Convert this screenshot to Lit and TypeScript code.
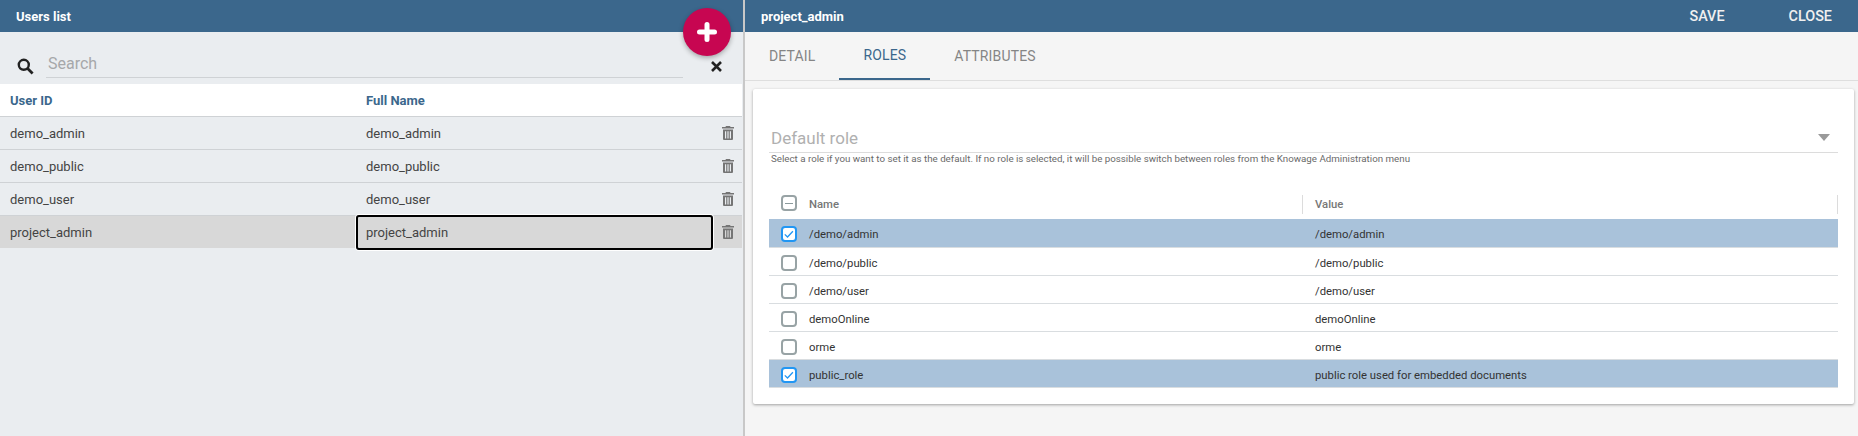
import { LitElement, css, html, svg } from 'lit'
import { customElement } from 'lit/decorators.js'

const users = ['demo_admin', 'demo_public', 'demo_user', 'project_admin']

const roles = [
  { name: '/demo/admin', value: '/demo/admin', checked: true },
  { name: '/demo/public', value: '/demo/public', checked: false },
  { name: '/demo/user', value: '/demo/user', checked: false },
  { name: 'demoOnline', value: 'demoOnline', checked: false },
  { name: 'orme', value: 'orme', checked: false },
  { name: 'public_role', value: 'public role used for embedded documents', checked: true },
]

const trash = svg`<path fill-rule="evenodd" d="M4 0h4l.6 1H12v1.6H0V1h3.4zM1 3.6h10V13a1 1 0 0 1-1 1H2a1 1 0 0 1-1-1zM3 5.2v7.2h1.2V5.2zm2.4 0v7.2h1.2V5.2zm2.4 0v7.2H9V5.2z"/>`

@customElement('app-root')
export class AppRoot extends LitElement {
  protected render() {
    return html`
      <section class="left">
        <header class="bar"><span class="title">Users list</span></header>
        <button class="fab" aria-label="Add">
          <svg width="20" height="20" viewBox="0 0 20 20"><path d="M10 2.5v15M2.5 10h15" stroke="#fff" stroke-width="5" stroke-linecap="round"/></svg>
        </button>
        <div class="search">
          <svg class="search-icon" width="17" height="17" viewBox="0 0 17 17">
            <circle cx="6.8" cy="6.8" r="5" fill="none" stroke="#222" stroke-width="2.4"/>
            <path d="M10.6 10.6l5 5" stroke="#222" stroke-width="2.8"/>
          </svg>
          <div class="search-input">Search</div>
          <svg class="clear" width="11" height="11" viewBox="0 0 11 11"><path d="M1 1l9 9M10 1l-9 9" stroke="#222" stroke-width="2.6"/></svg>
        </div>
        <div class="thead">
          <span class="id">User ID</span>
          <span class="full">Full Name</span>
        </div>
        ${users.map(
          (u) => html`
            <div class="row ${u === 'project_admin' ? 'active' : ''}">
              <span class="id">${u}</span>
              <span class="full">${u}</span>
              <svg class="trash" width="12" height="14" viewBox="0 0 12 14" fill="#757575">${trash}</svg>
            </div>
          `,
        )}
      </section>
      <section class="right">
        <header class="bar">
          <span class="title">project_admin</span>
          <span class="actions"><span>SAVE</span><span>CLOSE</span></span>
        </header>
        <nav class="tabs">
          <span class="tab">DETAIL</span>
          <span class="tab on">ROLES</span>
          <span class="tab">ATTRIBUTES</span>
        </nav>
        <div class="card">
          <div class="select">
            <span>Default role</span>
            <i class="caret"></i>
          </div>
          <div class="hint">Select a role if you want to set it as the default. If no role is selected, it will be possible switch between roles from the Knowage Administration menu</div>
          <div class="grid">
            <div class="ghead">
              <span class="box minus"></span>
              <span class="c-name">Name</span>
              <span class="c-value">Value</span>
            </div>
            ${roles.map(
              (r) => html`
                <div class="grow ${r.checked ? 'sel' : ''}">
                  ${r.checked
                    ? html`<span class="box checked">
                        <svg width="12" height="12" viewBox="0 0 12 12"><path d="M1.8 6.4l2.7 2.6 5.4-5.8" fill="none" stroke="#2196f3" stroke-width="1.3"/></svg>
                      </span>`
                    : html`<span class="box"></span>`}
                  <span class="c-name">${r.name}</span>
                  <span class="c-value">${r.value}</span>
                </div>
              `,
            )}
          </div>
        </div>
      </section>
    `
  }

  static styles = css`
    :host {
      display: flex;
      width: 1858px;
      height: 436px;
      overflow: hidden;
      font-family: Roboto, 'Liberation Sans', sans-serif;
    }

    .left {
      position: relative;
      width: 743px;
      flex: none;
      background: #eaedf0;
      border-right: 2px solid #c8c8c8;
    }

    .right {
      flex: 1;
      min-width: 0;
      background: #f5f5f5;
    }

    .bar {
      height: 32px;
      display: flex;
      align-items: center;
      justify-content: space-between;
      padding: 0 16px;
      background: #3b678c;
      color: #fff;
    }

    .title {
      font-size: 13px;
      font-weight: 700;
    }

    .actions {
      display: flex;
      gap: 64px;
      padding-right: 10px;
      font-size: 14.4px;
      font-weight: 500;
      color: #f0f0f0;
    }

    .fab {
      position: absolute;
      left: 683px;
      top: 8px;
      width: 48px;
      height: 48px;
      display: flex;
      align-items: center;
      justify-content: center;
      padding: 0;
      border: 0;
      border-radius: 50%;
      background: #c70651;
      box-shadow: 0 2px 5px rgba(0, 0, 0, 0.3);
    }

    .search {
      position: relative;
      height: 52px;
      box-sizing: border-box;
      display: flex;
      align-items: flex-end;
      padding: 0 0 6px 17px;
    }

    .search-icon {
      margin: 0 12px 3px 0;
    }

    .search-input {
      width: 637px;
      height: 24px;
      box-sizing: border-box;
      padding-left: 2px;
      border-bottom: 1px solid #cfd2d5;
      font-size: 16px;
      line-height: 19px;
      color: #a6a8aa;
    }

    .clear {
      position: absolute;
      left: 711px;
      top: 29px;
    }

    .thead,
    .row {
      position: relative;
      display: flex;
      align-items: center;
      height: 33px;
      margin-right: 1px;
      box-sizing: border-box;
      border-bottom: 1px solid #cfd2d5;
      font-size: 13px;
    }

    .thead {
      background: #fff;
      font-weight: 700;
      color: #3b678c;
    }

    .row {
      color: #444;
    }

    .row.active {
      height: 32px;
      background: #d8d8d8;
      border-bottom: 0;
    }

    .id {
      width: 356px;
      padding-left: 10px;
      box-sizing: border-box;
    }

    .full {
      padding-left: 10px;
    }

    .row.active .full {
      flex: none;
      width: 357px;
      height: 35px;
      display: flex;
      align-items: center;
      box-sizing: border-box;
      padding-left: 8px;
      border: 2px solid #000;
      border-radius: 3px;
      box-shadow: 0 0 0 1px #fff;
    }

    .trash {
      position: absolute;
      right: 8px;
      top: 9px;
    }

    .tabs {
      height: 49px;
      display: flex;
      box-sizing: border-box;
      border-bottom: 1px solid #dedede;
    }

    .tab {
      height: 48px;
      display: flex;
      align-items: center;
      padding: 0 24px;
      font-size: 14px;
      letter-spacing: 0.15px;
      color: #858585;
      box-sizing: border-box;
    }

    .tab.on {
      color: #3b678c;
      border-bottom: 2px solid #3b678c;
    }

    .card {
      margin: 8px 4px 0 8px;
      height: 315px;
      padding: 32px 16px 0 16px;
      box-sizing: border-box;
      background: #fff;
      border-radius: 2px;
      box-shadow: 0 1px 3px rgba(0, 0, 0, 0.35);
    }

    .select {
      height: 32px;
      display: flex;
      align-items: center;
      justify-content: space-between;
      padding: 2px 8px 0 2px;
      box-sizing: border-box;
      font-size: 17px;
      color: #b0b0b0;
      border-bottom: 1px solid #dcdcdc;
    }

    .caret {
      width: 0;
      height: 0;
      border: 6px solid transparent;
      border-top: 7px solid #9a9a9a;
      border-bottom: 0;
    }

    .hint {
      padding-left: 2px;
      font-size: 9.75px;
      line-height: 12px;
      color: #6a6a6a;
    }

    .grid {
      margin-top: 27px;
    }

    .ghead,
    .grow {
      display: flex;
      align-items: center;
      box-sizing: border-box;
      padding-left: 12px;
      font-size: 11.3px;
      color: #333;
    }

    .grow {
      height: 28px;
      padding-top: 3px;
      border-bottom: 1px solid #d9dde0;
    }

    .ghead {
      height: 24px;
      margin-bottom: 3px;
      color: #777;
      font-weight: 500;
    }

    .ghead .box {
      margin-top: -2px;
    }

    .ghead + .grow {
      height: 29px;
      padding-top: 2px;
    }

    .grow.sel {
      background: #a9c2da;
    }

    .box {
      width: 16px;
      height: 16px;
      flex: none;
      display: flex;
      align-items: center;
      justify-content: center;
      box-sizing: border-box;
      border: 2px solid #98a3a5;
      border-radius: 4px;
      background: #fff;
    }

    .box.minus::before {
      content: '';
      width: 8px;
      height: 1px;
      background: #8b9a9c;
    }

    .box.checked {
      border-color: #2196f3;
    }

    .c-name {
      width: 494px;
      margin-left: 12px;
      box-sizing: border-box;
    }

    .c-value {
      flex: 1;
      padding-left: 12px;
    }

    .ghead .c-name,
    .ghead .c-value {
      height: 19px;
      display: flex;
      align-items: center;
      border-right: 1px solid #dcdcdc;
    }
  `
}
